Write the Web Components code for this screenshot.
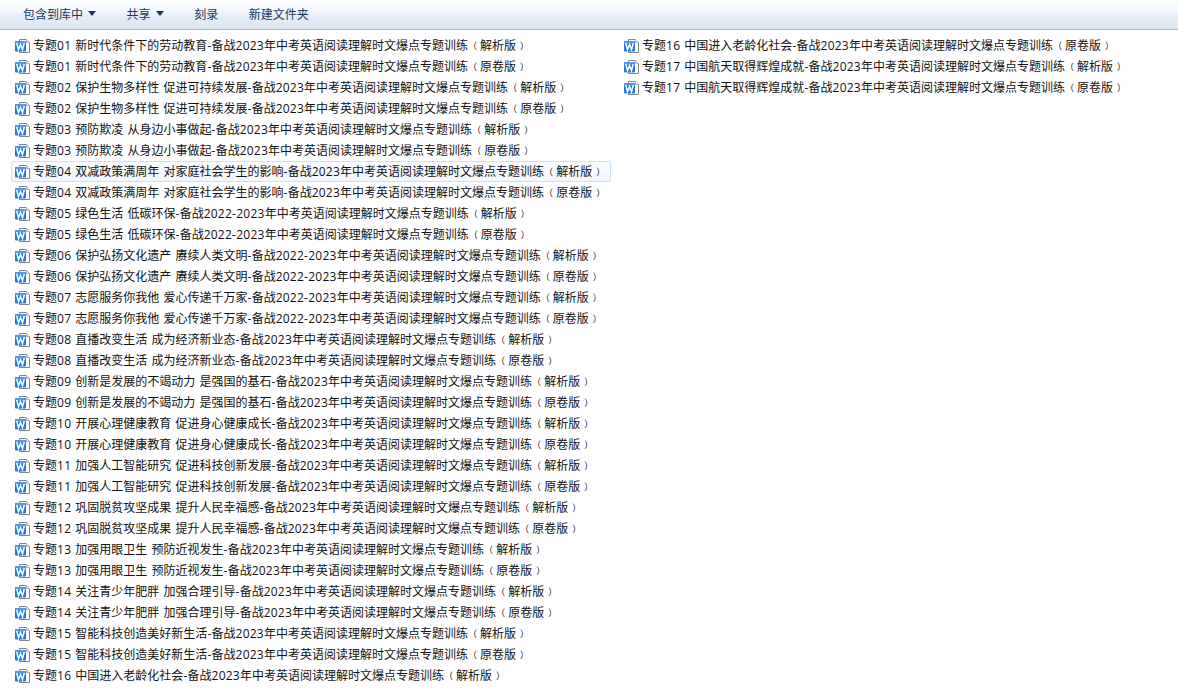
<!DOCTYPE html>
<html lang="zh-CN"><head><meta charset="utf-8"><title>文件夹</title>
<style>html,body{margin:0;padding:0;background:#fff;height:100%;overflow:hidden}</style></head>
<body><explorer-view></explorer-view>
<script>
const tail='中考英语阅读理解时文爆点专题训练';
const topics=[
['专题01 新时代条件下的劳动教育','2023'],['专题02 保护生物多样性 促进可持续发展','2023'],['专题03 预防欺凌 从身边小事做起','2023'],
['专题04 双减政策满周年 对家庭社会学生的影响','2023'],['专题05 绿色生活 低碳环保','2022-2023'],['专题06 保护弘扬文化遗产 赓续人类文明','2022-2023'],
['专题07 志愿服务你我他 爱心传递千万家','2022-2023'],['专题08 直播改变生活 成为经济新业态','2023'],['专题09 创新是发展的不竭动力 是强国的基石','2023'],
['专题10 开展心理健康教育 促进身心健康成长','2023'],['专题11 加强人工智能研究 促进科技创新发展','2023'],['专题12 巩固脱贫攻坚成果 提升人民幸福感','2023'],
['专题13 加强用眼卫生 预防近视发生','2023'],['专题14 关注青少年肥胖 加强合理引导','2023'],['专题15 智能科技创造美好新生活','2023'],
['专题16 中国进入老龄化社会','2023'],['专题17 中国航天取得辉煌成就','2023']];
class WordIcon extends HTMLElement{constructor(){super();this.attachShadow({mode:'open'}).innerHTML=`<style>:host{display:block;width:16px;height:16px;flex:none;margin-top:1px}svg{display:block}</style>
<svg width="16" height="16" viewBox="0 0 16 16"><path d="M4.5 1.5H11.5L14.5 4.5V14.5H4.5Z" fill="#fff" stroke="#7f848a"/><path d="M11.5 1.5V4.5H14.5" fill="#eef1f5" stroke="#b0b3b8"/><rect x="0" y="3" width="11" height="10.5" rx="1" fill="#1f78e6"/><rect x="0" y="3" width="11" height="3" rx="1" fill="#4f95f0"/><path d="M1.7 5L3.5 11.6L5.5 6.6L7.5 11.6L9.3 5" fill="none" stroke="#fff" stroke-width="1.5"/></svg>`}}
customElements.define('word-icon',WordIcon);
class ToolButton extends HTMLElement{constructor(){super();this.attachShadow({mode:'open'}).innerHTML=`<style>:host{display:flex;align-items:center;gap:5px;height:100%}
.a{display:none;width:0;height:0;border-left:4.5px solid transparent;border-right:4.5px solid transparent;border-top:5px solid #1e395b}
:host([menu]) .a{display:block}</style><slot></slot><span class="a"></span>`}}
customElements.define('tool-button',ToolButton);
class CommandBar extends HTMLElement{constructor(){super();this.attachShadow({mode:'open'}).innerHTML=`<style>:host{display:flex;box-sizing:border-box;height:30px;padding:0 0 3px 23px;gap:30.6px;align-items:center;color:#1e395b;font:12px "Noto Sans CJK SC","Liberation Sans",sans-serif;
background:linear-gradient(#fbfdfe 0,#f3f7fc 40%,#e7eef7 50%,#dbe6f2 100%);border-bottom:1px solid #a9bacd;box-shadow:inset 0 -1px 0 #d4dfec}</style>
<tool-button menu>包含到库中</tool-button><tool-button menu>共享</tool-button><tool-button>刻录</tool-button><tool-button>新建文件夹</tool-button>`}}
customElements.define('command-bar',CommandBar);
class FileItem extends HTMLElement{static get observedAttributes(){return['name']}
constructor(){super();this.attachShadow({mode:'open'}).innerHTML=`<style>:host{display:flex;box-sizing:border-box;height:21px;width:600px;padding-left:3px;align-items:center;gap:2px;border:1px solid transparent;border-radius:2px;color:#111;white-space:nowrap}
:host([selected]){border-color:#cfe0f5;background:linear-gradient(#fafcff,#f1f6fd)}
span{display:block;margin-top:-2px;font:12px "Open Sans","Noto Sans CJK SC",sans-serif;word-spacing:1px}
u{text-decoration:none;letter-spacing:.25px}
i{font-style:normal;font-size:9px;vertical-align:1px}
.o{margin-right:3px}.c{margin-left:4px}</style><word-icon></word-icon><span></span>`}
attributeChangedCallback(){const s=this.shadowRoot.querySelector('span');s.textContent='';const m=this.getAttribute('name').match(/^(.*)（(.*)）$/);
m[1].split(/([0-9-]+)/).forEach((p,n)=>{if(n%2){const u=document.createElement('u');u.textContent=p;s.append(u)}else s.append(p)});
const o=document.createElement('i');o.className='o';o.textContent='（';const c=document.createElement('i');c.className='c';c.textContent='）';s.append(o,m[2],c)}}
customElements.define('file-item',FileItem);
class ExplorerView extends HTMLElement{constructor(){super();const r=this.attachShadow({mode:'open'});r.innerHTML=`<style>:host{display:block;height:699px;overflow:hidden}
#l{display:grid;grid-auto-flow:column;grid-template-rows:repeat(31,21px);grid-auto-columns:609px;padding:5px 0 0 11px}</style><command-bar></command-bar><div id="l"></div>`;
const l=r.getElementById('l');topics.forEach(([t,y])=>{['解析版','原卷版'].forEach(k=>{const f=document.createElement('file-item');f.setAttribute('name',`${t}-备战${y}年${tail}（${k}）`);if(t.startsWith('专题04')&&k==='解析版')f.setAttribute('selected','');l.append(f)})})}}
customElements.define('explorer-view',ExplorerView);
</script></body></html>
